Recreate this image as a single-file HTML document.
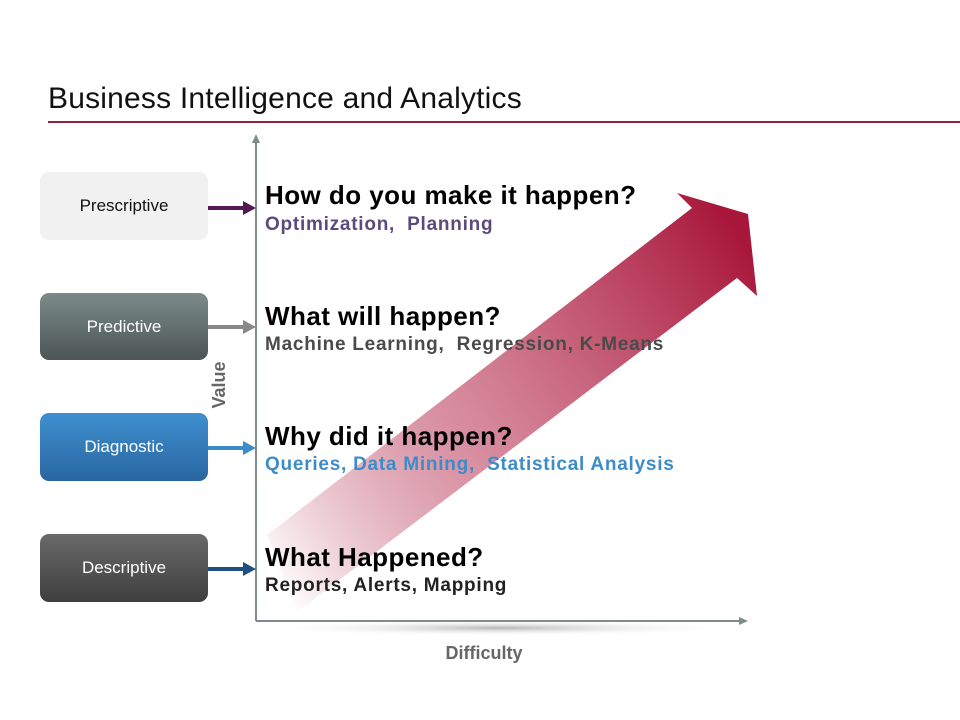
<!DOCTYPE html>
<html><head><meta charset="utf-8"><style>
body{margin:0;width:960px;height:720px;background:#fff;position:relative;overflow:hidden;font-family:"Liberation Sans",Arial,sans-serif}
.a{position:absolute;white-space:nowrap}
.box{position:absolute;left:40px;width:168px;border-radius:9px;text-align:center;font-size:17px}
.h{position:absolute;left:265px;font-size:26px;font-weight:bold;color:#000;white-space:nowrap;letter-spacing:0.45px}
.s{position:absolute;left:265px;font-size:19px;font-weight:bold;white-space:nowrap;letter-spacing:0.75px}
</style></head><body>
<div class="a" style="left:48px;top:82px;font-size:30px;color:#111;letter-spacing:0.2px">Business Intelligence and Analytics</div>
<div class="a" style="left:48px;top:121px;width:912px;height:2px;background:#8e2342"></div>

<svg width="960" height="720" style="position:absolute;left:0;top:0">
<defs>
<linearGradient id="g" x1="270" y1="580" x2="745" y2="240" gradientUnits="userSpaceOnUse">
<stop offset="0" stop-color="#a8163a" stop-opacity="0"/>
<stop offset="0.45" stop-color="#c8607a" stop-opacity="0.75"/>
<stop offset="1" stop-color="#a8163a"/>
</linearGradient>
<radialGradient id="sh" cx="0.5" cy="0.5" r="0.5"><stop offset="0" stop-color="#999" stop-opacity="0.7"/><stop offset="1" stop-color="#fff" stop-opacity="0"/></radialGradient>
</defs>
<ellipse cx="500" cy="628" rx="240" ry="8" fill="url(#sh)"/>
<polygon points="267,535 692,208 677,193 748,214 757,296 737,278 297,612" fill="url(#g)"/>
<line x1="256" y1="140" x2="256" y2="621" stroke="#7f8c8c" stroke-width="2"/>
<polygon points="252,143 260,143 256,134" fill="#7f8c8c"/>
<line x1="256" y1="621" x2="740" y2="621" stroke="#7f8c8c" stroke-width="2"/>
<polygon points="739,617 739,625 748,621" fill="#7f8c8c"/>
<g stroke-width="4">
<line x1="208" y1="208" x2="245" y2="208" stroke="#531a53"/>
<line x1="208" y1="327" x2="245" y2="327" stroke="#888"/>
<line x1="208" y1="448" x2="245" y2="448" stroke="#3d8cc8"/>
<line x1="208" y1="569" x2="245" y2="569" stroke="#1e4f7e"/>
</g>
<polygon points="243,201 243,215 256,208" fill="#531a53"/>
<polygon points="243,320 243,334 256,327" fill="#888"/>
<polygon points="243,441 243,455 256,448" fill="#3d8cc8"/>
<polygon points="243,562 243,576 256,569" fill="#1e4f7e"/>
<text x="225" y="385" transform="rotate(-90 225 385)" text-anchor="middle" font-family="Liberation Sans, sans-serif" font-size="18" font-weight="bold" fill="#666">Value</text>
<text x="484" y="659" text-anchor="middle" font-family="Liberation Sans, sans-serif" font-size="18" font-weight="bold" fill="#666">Difficulty</text>
</svg>

<div class="box" style="top:172px;height:68px;line-height:68px;background:#f1f1f1;color:#111">Prescriptive</div>
<div class="box" style="top:293px;height:67px;line-height:67px;background:linear-gradient(#7b8a88,#4c5654);color:#fff">Predictive</div>
<div class="box" style="top:413px;height:68px;line-height:68px;background:linear-gradient(#3f8fd0,#2866a0);color:#fff">Diagnostic</div>
<div class="box" style="top:534px;height:68px;line-height:68px;background:linear-gradient(#6a6a6a,#3e3e3e);color:#fff">Descriptive</div>

<div class="h" style="top:180px">How do you make it happen?</div>
<div class="s" style="top:214px;color:#5b4a7e">Optimization,&nbsp; Planning</div>
<div class="h" style="top:301px">What will happen?</div>
<div class="s" style="top:334px;color:#4a4a4a">Machine Learning,&nbsp; Regression, K-Means</div>
<div class="h" style="top:421px">Why did it happen?</div>
<div class="s" style="top:454px;color:#3d8cc8">Queries, Data Mining,&nbsp; Statistical Analysis</div>
<div class="h" style="top:542px">What Happened?</div>
<div class="s" style="top:575px;color:#222">Reports, Alerts, Mapping</div>
</body></html>
